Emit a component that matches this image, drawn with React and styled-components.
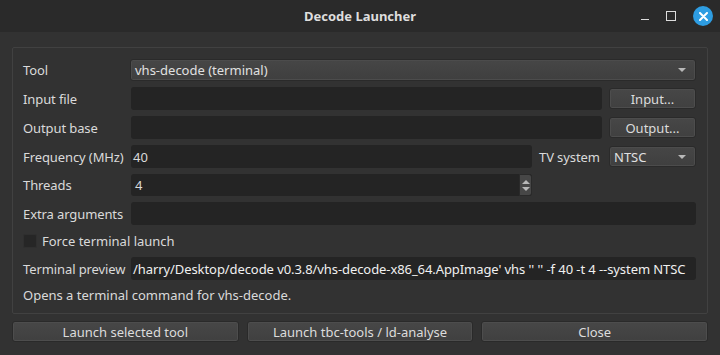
import styled, { createGlobalStyle } from 'styled-components';

const Global = createGlobalStyle`
  html, body {
    margin: 0;
    padding: 0;
    background: #323232;
    font-family: "Noto Sans", "DejaVu Sans", sans-serif;
    font-size: 13px;
    color: #dadada;
  }
`;

const Window = styled.div`
  width: 720px;
  height: 355px;
  display: flex;
  flex-direction: column;
  background: #323232;
  overflow: hidden;
`;

const TitleBar = styled.div`
  height: 32px;
  flex: none;
  background: #2a2a2a;
  display: flex;
  align-items: center;
  justify-content: center;
  position: relative;
  font-weight: 700;
  font-size: 13px;
  color: #dedede;
`;

const WinControls = styled.div`
  position: absolute;
  right: 7px;
  top: 0;
  height: 32px;
  display: flex;
  align-items: center;
  gap: 11px;
`;

const Minimize = styled.span`
  width: 8px;
  height: 1px;
  margin-top: 6px;
  background: #dcdcdc;
`;

const Maximize = styled.span`
  width: 8px;
  height: 8px;
  border: 1px solid #dcdcdc;
  margin: 0 6px;
`;

const CloseDot = styled.span`
  width: 20px;
  height: 20px;
  border-radius: 50%;
  background: #2e9de2;
  display: flex;
  align-items: center;
  justify-content: center;
`;

const Body = styled.div`
  flex: 1;
  display: flex;
  flex-direction: column;
  padding: 15px 12px 0;
  gap: 7px;
`;

const Group = styled.div`
  border: 1px solid #414141;
  border-radius: 2px;
  padding: 11px 11px 10px 10px;
  display: flex;
  flex-direction: column;
  gap: 6px;
`;

const Row = styled.div`
  display: flex;
  align-items: center;
  height: ${(p) => p.h || 23}px;
  gap: 7px;
`;

const Label = styled.div`
  width: ${(p) => p.w || 101}px;
  flex: none;
  white-space: nowrap;
  letter-spacing: -0.1px;
`;

const Field = styled.div`
  flex: ${(p) => (p.w ? 'none' : 1)};
  width: ${(p) => (p.w ? `${p.w}px` : 'auto')};
  height: 100%;
  box-sizing: border-box;
  background: #242424;
  border-radius: 3px;
  display: flex;
  align-items: center;
  padding: 0 ${(p) => p.pad || 2}px;
  color: ${(p) => (p.bright ? '#f0f0f0' : '#dadada')};
  letter-spacing: ${(p) => (p.bright ? '-0.08px' : 'normal')};
  white-space: nowrap;
  overflow: hidden;
  position: relative;
`;

const Combo = styled.div`
  flex: ${(p) => (p.w ? 'none' : 1)};
  width: ${(p) => (p.w ? `${p.w}px` : 'auto')};
  height: ${(p) => p.h || 21}px;
  box-sizing: border-box;
  background: linear-gradient(#464646, #3f3f3f);
  border: 1px solid #2a2a2a;
  box-shadow: inset 0 0 0 1px #4c4c4c;
  border-radius: 3px;
  display: flex;
  align-items: center;
  justify-content: space-between;
  padding: 0 9px 0 4px;
  color: #e0e0e0;
`;

const Arrow = styled.span`
  width: 0;
  height: 0;
  border-left: 4px solid transparent;
  border-right: 4px solid transparent;
  border-top: 4px solid #b8b8b8;
`;

const Button = styled.button`
  flex: ${(p) => (p.w ? 'none' : 1)};
  width: ${(p) => (p.w ? `${p.w}px` : 'auto')};
  height: 21px;
  box-sizing: border-box;
  background: linear-gradient(#474747, #404040);
  border: 1px solid #2a2a2a;
  box-shadow: inset 0 0 0 1px #4d4d4d;
  border-radius: 3px;
  font-family: inherit;
  font-size: 13px;
  color: #dcdcdc;
  padding: 0;
`;

const SpinButtons = styled.div`
  position: absolute;
  right: 0;
  top: 0;
  bottom: 0;
  width: 13px;
  background: #474747;
  border-radius: 0 3px 3px 0;
  border: 1px solid #2a2a2a;
  box-sizing: border-box;
  display: flex;
  flex-direction: column;
  align-items: center;
  justify-content: center;
  gap: 3px;
`;

const UpArrow = styled.span`
  width: 0;
  height: 0;
  border-left: 4px solid transparent;
  border-right: 4px solid transparent;
  border-bottom: 4px solid #b8b8b8;
`;

const Check = styled.span`
  width: 12px;
  height: 12px;
  background: #262626;
  border: 1px solid #2f2f2f;
  border-radius: 2px;
  flex: none;
`;

const CheckRow = styled(Row)`
  gap: 5px;
  height: 20px;
`;

const Info = styled.div`
  height: 17px;
  display: flex;
  align-items: center;
`;

const Footer = styled.div`
  display: flex;
  gap: 8px;
`;

export default function App() {
  return (
    <Window>
      <Global />
      <TitleBar>
        Decode Launcher
        <WinControls>
          <Minimize />
          <Maximize />
          <CloseDot>
            <svg width="9" height="9" viewBox="0 0 9 9">
              <path d="M1 1L8 8M8 1L1 8" stroke="#fff" strokeWidth="2" strokeLinecap="round" />
            </svg>
          </CloseDot>
        </WinControls>
      </TitleBar>
      <Body>
        <Group>
          <Row h={22}>
            <Label w={100}>Tool</Label>
            <Combo h={22}>
              vhs-decode (terminal)
              <Arrow />
            </Combo>
          </Row>
          <Row>
            <Label>Input file</Label>
            <Field />
            <Button w={87}>Input...</Button>
          </Row>
          <Row>
            <Label>Output base</Label>
            <Field />
            <Button w={87}>Output...</Button>
          </Row>
          <Row>
            <Label>Frequency (MHz)</Label>
            <Field>40</Field>
            <Label w={63}>TV system</Label>
            <Combo w={87}>
              NTSC
              <Arrow />
            </Combo>
          </Row>
          <Row h={22}>
            <Label>Threads</Label>
            <Field pad={4}>
              4
              <SpinButtons>
                <UpArrow />
                <Arrow />
              </SpinButtons>
            </Field>
            <Label w={157} />
          </Row>
          <Row>
            <Label>Extra arguments</Label>
            <Field />
          </Row>
          <CheckRow>
            <Check />
            Force terminal launch
          </CheckRow>
          <Row>
            <Label>Terminal preview</Label>
            <Field bright>
              /harry/Desktop/decode v0.3.8/vhs-decode-x86_64.AppImage' vhs '' '' -f 40 -t 4 --system NTSC
            </Field>
          </Row>
          <Info>Opens a terminal command for vhs-decode.</Info>
        </Group>
        <Footer>
          <Button>Launch selected tool</Button>
          <Button>Launch tbc-tools / ld-analyse</Button>
          <Button>Close</Button>
        </Footer>
      </Body>
    </Window>
  );
}
